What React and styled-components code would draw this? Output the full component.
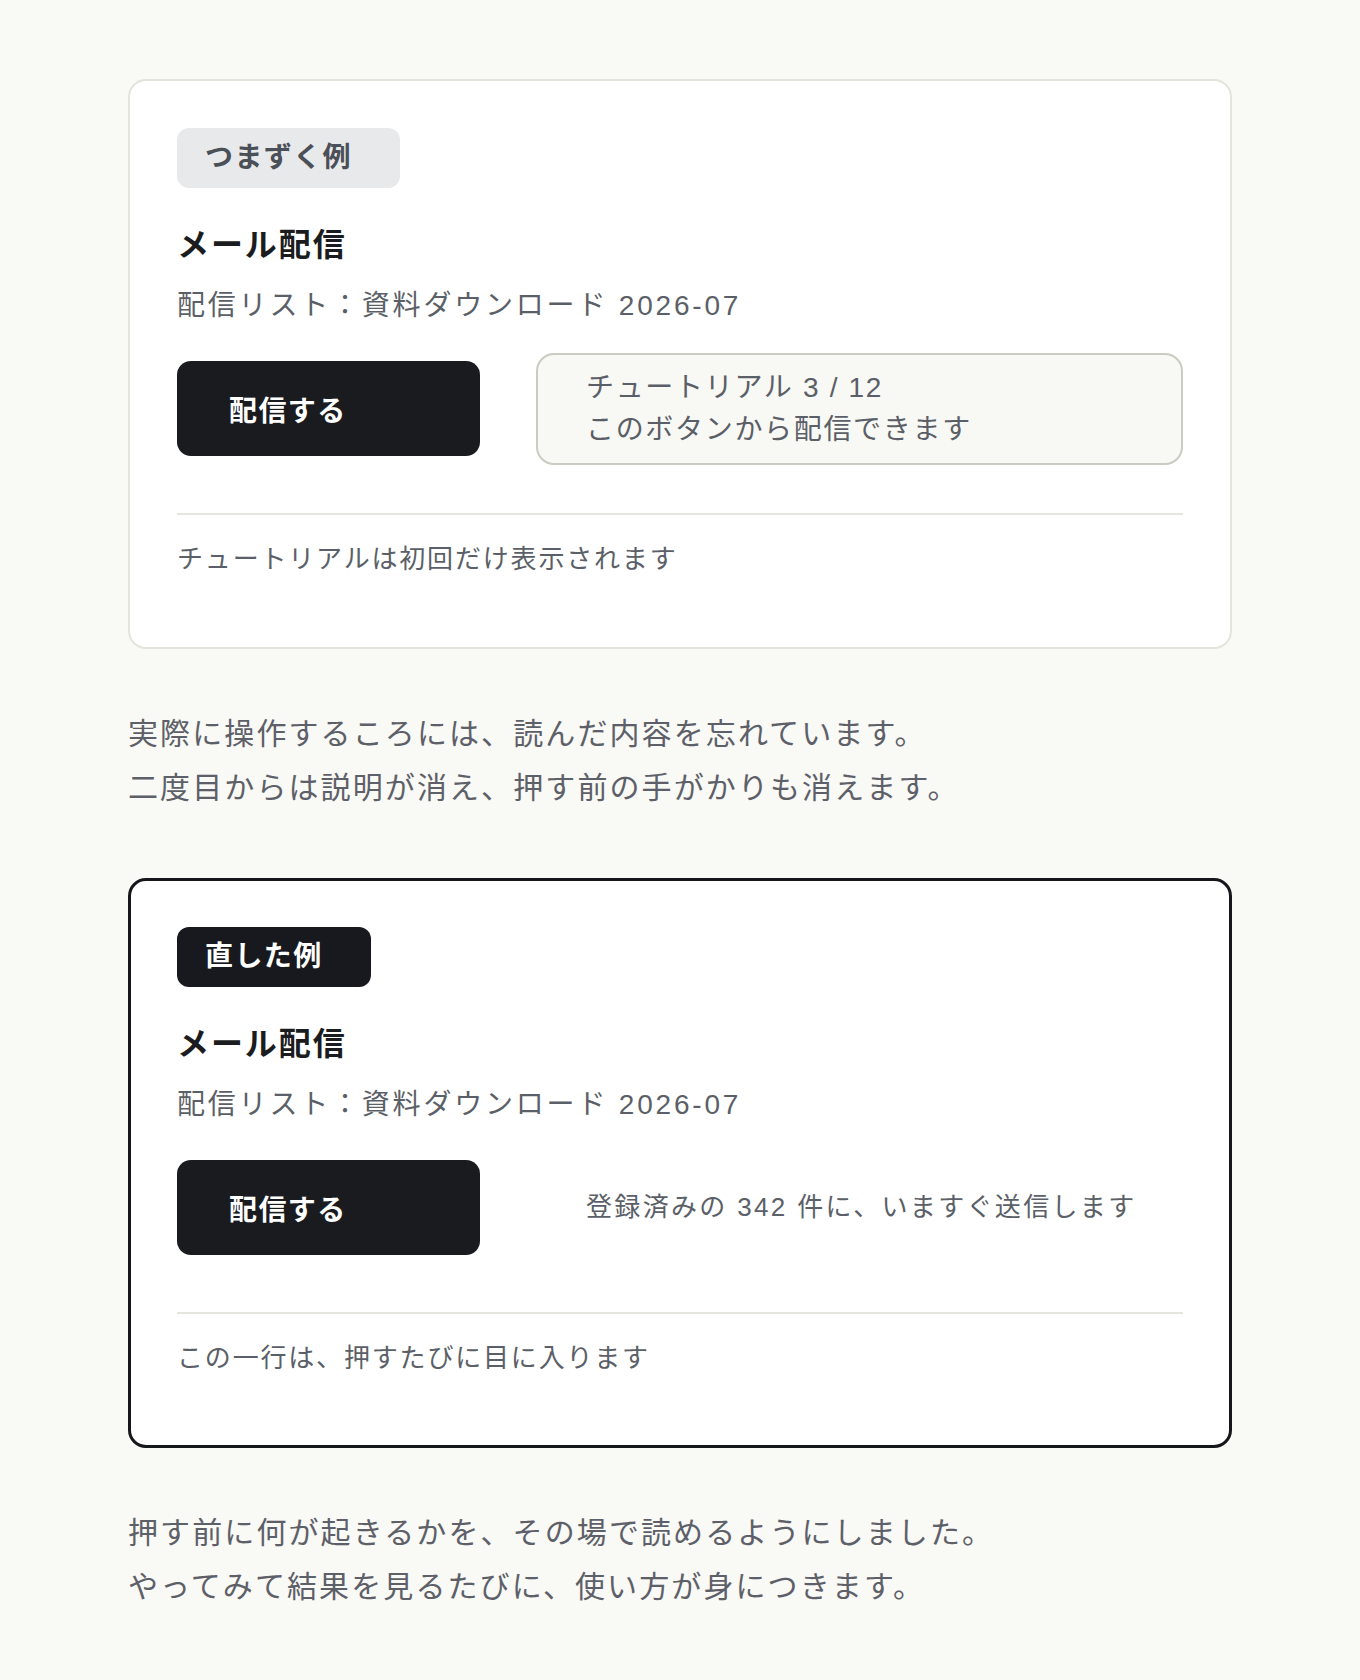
import React from 'react';
import styled, { createGlobalStyle, css } from 'styled-components';

const GlobalStyle = createGlobalStyle`
  body {
    margin: 0;
    background: #f9f9f5;
    font-family: "Liberation Sans", "Noto Sans CJK JP", sans-serif;
    color: #1b1c20;
  }
`;

const Page = styled.main`
  padding: 79px 128px 80px;
  display: flex;
  flex-direction: column;
`;

const Card = styled.section`
  background: #ffffff;
  border-radius: 18px;
  display: flex;
  flex-direction: column;
  align-items: flex-start;
  ${({ $strong }) =>
    $strong
      ? css`
          border: 3px solid #16171b;
          padding: 46px 46px 67px;
        `
      : css`
          border: 2px solid #e4e4dc;
          padding: 47px 47px 68px;
        `}
`;

const Badge = styled.span`
  display: inline-block;
  height: 60px;
  line-height: 60px;
  padding: 0 48px 0 28px;
  border-radius: 12px;
  font-size: 28px;
  font-weight: 700;
  letter-spacing: 0.05em;
  background: ${({ $dark }) => ($dark ? '#18191e' : '#e8e9eb')};
  color: ${({ $dark }) => ($dark ? '#ffffff' : '#4b4f57')};
`;

const Title = styled.h2`
  margin: 35px 0 0;
  font-size: 32px;
  line-height: 45px;
  font-weight: 700;
  letter-spacing: 0.06em;
  color: #1b1c20;
`;

const ListName = styled.p`
  margin: 17px 0 0;
  font-size: 28px;
  line-height: 42px;
  letter-spacing: 0.1em;
  color: #5b5f67;
`;

const ActionRow = styled.div`
  align-self: stretch;
  margin-top: 25px;
  min-height: 113px;
  display: flex;
  align-items: center;
  gap: 56px;
`;

const SendButton = styled.button`
  flex: none;
  width: 303px;
  height: 95px;
  padding: 0 0 0 52px;
  border: none;
  border-radius: 14px;
  background: #1a1b1f;
  color: #ffffff;
  font-family: inherit;
  font-size: 28px;
  font-weight: 700;
  letter-spacing: 0.05em;
  text-align: left;
  cursor: pointer;
`;

/* hint next to the send button: boxed tutorial bubble, or a plain line */
const Hint = styled.div`
  flex: 1;
  min-width: 0;
  box-sizing: border-box;
  color: #5b5f67;
  letter-spacing: 0.06em;
  ${({ $plain }) =>
    $plain
      ? css`
          padding: 0 0 0 48px;
          border: 2px solid transparent;
          font-size: 26px;
          line-height: 39px;
          letter-spacing: 0.09em;
          white-space: nowrap;
        `
      : css`
          padding: 12px 48px;
          border: 2px solid #cbcbc2;
          border-radius: 18px;
          background: #f8f8f4;
          font-size: 28px;
          line-height: 42px;
        `}
`;

const HintLine = styled.div``;

const Footer = styled.p`
  align-self: stretch;
  margin: 48px 0 0;
  padding-top: 25px;
  border-top: 2px solid #e6e6df;
  font-size: 26px;
  line-height: 39px;
  letter-spacing: 0.07em;
  color: #5b5f67;
`;

const Note = styled.p`
  margin: 58px 0 ${({ $last }) => ($last ? '0' : '63px')};
  font-size: 30px;
  line-height: 54px;
  letter-spacing: 0.07em;
  color: #5d6068;
`;

const Example = ({ strong, label, children, footer }) => (
  <Card $strong={strong}>
    <Badge $dark={strong}>{label}</Badge>
    <Title>メール配信</Title>
    <ListName>配信リスト：資料ダウンロード 2026-07</ListName>
    <ActionRow>
      <SendButton type="button">配信する</SendButton>
      {children}
    </ActionRow>
    <Footer>{footer}</Footer>
  </Card>
);

const App = () => (
  <>
    <GlobalStyle />
    <Page>
      <Example label="つまずく例" footer="チュートリアルは初回だけ表示されます">
        <Hint>
          <HintLine>チュートリアル 3 / 12</HintLine>
          <HintLine>このボタンから配信できます</HintLine>
        </Hint>
      </Example>
      <Note>
        実際に操作するころには、読んだ内容を忘れています。
        <br />
        二度目からは説明が消え、押す前の手がかりも消えます。
      </Note>

      <Example strong label="直した例" footer="この一行は、押すたびに目に入ります">
        <Hint $plain>登録済みの 342 件に、いますぐ送信します</Hint>
      </Example>
      <Note $last>
        押す前に何が起きるかを、その場で読めるようにしました。
        <br />
        やってみて結果を見るたびに、使い方が身につきます。
      </Note>
    </Page>
  </>
);

export default App;
